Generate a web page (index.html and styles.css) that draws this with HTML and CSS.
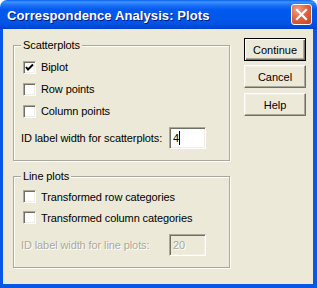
FILE: index.html
```html
<!DOCTYPE html>
<html lang="en">
<head>
    <meta charset="UTF-8">
    <title>Correspondence Analysis: Plots</title>
    <link rel="stylesheet" href="styles.css">
</head>
<body>
    <div class="window">
        <div class="titlebar">
            <span class="title">Correspondence Analysis: Plots</span>
            <span class="close">
                <svg width="21" height="21" viewBox="0 0 21 21">
                    <path d="M6 6 L15 15 M15 6 L6 15" stroke="#fff" stroke-width="2.2" stroke-linecap="square"/>
                </svg>
            </span>
        </div>
        <div class="frame">
            <div class="client">
                <div class="groups">
                    <fieldset class="group scatter">
                        <legend>Scatterplots</legend>
                        <div class="check-row">
                            <span class="box">
                                <svg width="11" height="11" viewBox="0 0 11 11">
                                    <path d="M2 5 L4 7.5 L9 2.5" fill="none" stroke="#000" stroke-width="2"/>
                                </svg>
                            </span>
                            <span>Biplot</span>
                        </div>
                        <div class="check-row"><span class="box"></span><span>Row points</span></div>
                        <div class="check-row"><span class="box"></span><span>Column points</span></div>
                        <div class="id-row">
                            <span class="id-label">ID label width for scatterplots:</span>
                            <span class="field"><span class="value caret">4</span></span>
                        </div>
                    </fieldset>
                    <fieldset class="group lines">
                        <legend>Line plots</legend>
                        <div class="check-row"><span class="box"></span><span>Transformed row categories</span></div>
                        <div class="check-row"><span class="box"></span><span>Transformed column categories</span></div>
                        <div class="id-row disabled">
                            <span class="id-label">ID label width for line plots:</span>
                            <span class="field"><span class="value">20</span></span>
                        </div>
                    </fieldset>
                </div>
                <div class="buttons">
                    <button class="btn default">Continue</button>
                    <button class="btn">Cancel</button>
                    <button class="btn help">Help</button>
                </div>
            </div>
        </div>
    </div>
</body>
</html>
```

FILE: styles.css
```css
body {
    margin: 0;
    font-family: "Liberation Sans", Arial, sans-serif;
    font-size: 11px;
    letter-spacing: -0.1px;
    color: #000;
}
.window {
    width: 317px;
    height: 288px;
    display: flex;
    flex-direction: column;
}
.titlebar {
    height: 29px;
    display: flex;
    align-items: center;
    justify-content: space-between;
    padding: 0 5px 0 7px;
    background: linear-gradient(#0a5ff0 0, #3d93ff 2px, #1f72f7 5px, #0059ee 10px, #0055e8 22px, #0049da 27px, #003fcc 29px);
    border-radius: 7px 7px 0 0;
}
.title {
    color: #fff;
    font-weight: bold;
    font-size: 13px;
    letter-spacing: 0.1px;
    text-shadow: 1px 1px #0a1883;
    padding-top: 1px;
}
.close {
    width: 21px;
    height: 21px;
    box-sizing: border-box;
    border: 1px solid #fff;
    border-radius: 3px;
    background: radial-gradient(circle at 30% 25%, #f0a184 0, #e0663f 45%, #c5411c 100%);
    display: flex;
}
.close svg {
    margin: -1px;
}
.frame {
    flex: 1;
    display: flex;
    border-style: solid;
    border-color: #0758e6;
    border-width: 0 4px 4px 3px;
    box-shadow: inset 0 -1px #001ea0;
}
.client {
    flex: 1;
    display: flex;
    background: #ece9d8;
    padding: 9px 0 0 10px;
}
.group {
    width: 217px;
    box-sizing: border-box;
    margin: 0;
    min-width: 0;
    border: 1px solid #aca899;
    box-shadow: inset 1px 1px #fff, 1px 1px #fff;
}
.scatter {
    margin-top: 1px;
    padding: 4px 0 11px 9px;
}
.lines {
    margin-top: 9px;
    padding: 3px 0 11px 9px;
}
legend {
    line-height: 13px;
    padding: 0 2px;
    margin-left: -2px;
    background: #ece9d8;
}
.check-row {
    height: 22px;
    display: flex;
    align-items: center;
    gap: 5px;
    white-space: nowrap;
}
.lines .check-row {
    height: 21px;
}
.box {
    width: 13px;
    height: 13px;
    flex: none;
    box-sizing: border-box;
    background: #fff;
    border: 1px solid;
    border-color: #aca899 #fff #fff #aca899;
    box-shadow: inset 1px 1px #716f64, inset -1px -1px #f1efe2;
    display: flex;
    align-items: center;
    justify-content: center;
}
.id-row {
    display: flex;
    align-items: center;
    margin-left: -2px;
    margin-top: 5px;
    white-space: nowrap;
}
.lines .id-row {
    margin-top: 6px;
}
.id-label {
    width: 148px;
    flex: none;
}
.field {
    width: 37px;
    height: 22px;
    flex: none;
    box-sizing: border-box;
    background: #fff;
    border: 1px solid;
    border-color: #aca899 #fff #fff #aca899;
    box-shadow: inset 1px 1px #716f64, inset -1px -1px #f1efe2;
    display: flex;
    align-items: center;
    padding-left: 3px;
}
.caret {
    border-right: 1px solid #000;
    line-height: 14px;
}
.disabled {
    color: #aca899;
    text-shadow: 1px 1px #fff;
}
.disabled .field {
    background: #ece9d8;
}
.buttons {
    display: flex;
    flex-direction: column;
    gap: 4px;
    margin-left: 14px;
}
.btn {
    width: 62px;
    height: 23px;
    padding: 0;
    background: #ece9d8;
    font-family: inherit;
    font-size: 11px;
    color: #000;
    border: 1px solid;
    border-color: #fff #716f64 #716f64 #fff;
    box-shadow: inset -1px -1px #aca899, inset 1px 1px #f1efe2;
}
.default {
    border-color: #000;
    box-shadow: inset 1px 1px #fff, inset -1px -1px #716f64, inset -2px -2px #aca899;
}
.help {
    margin-top: 1px;
}
```
